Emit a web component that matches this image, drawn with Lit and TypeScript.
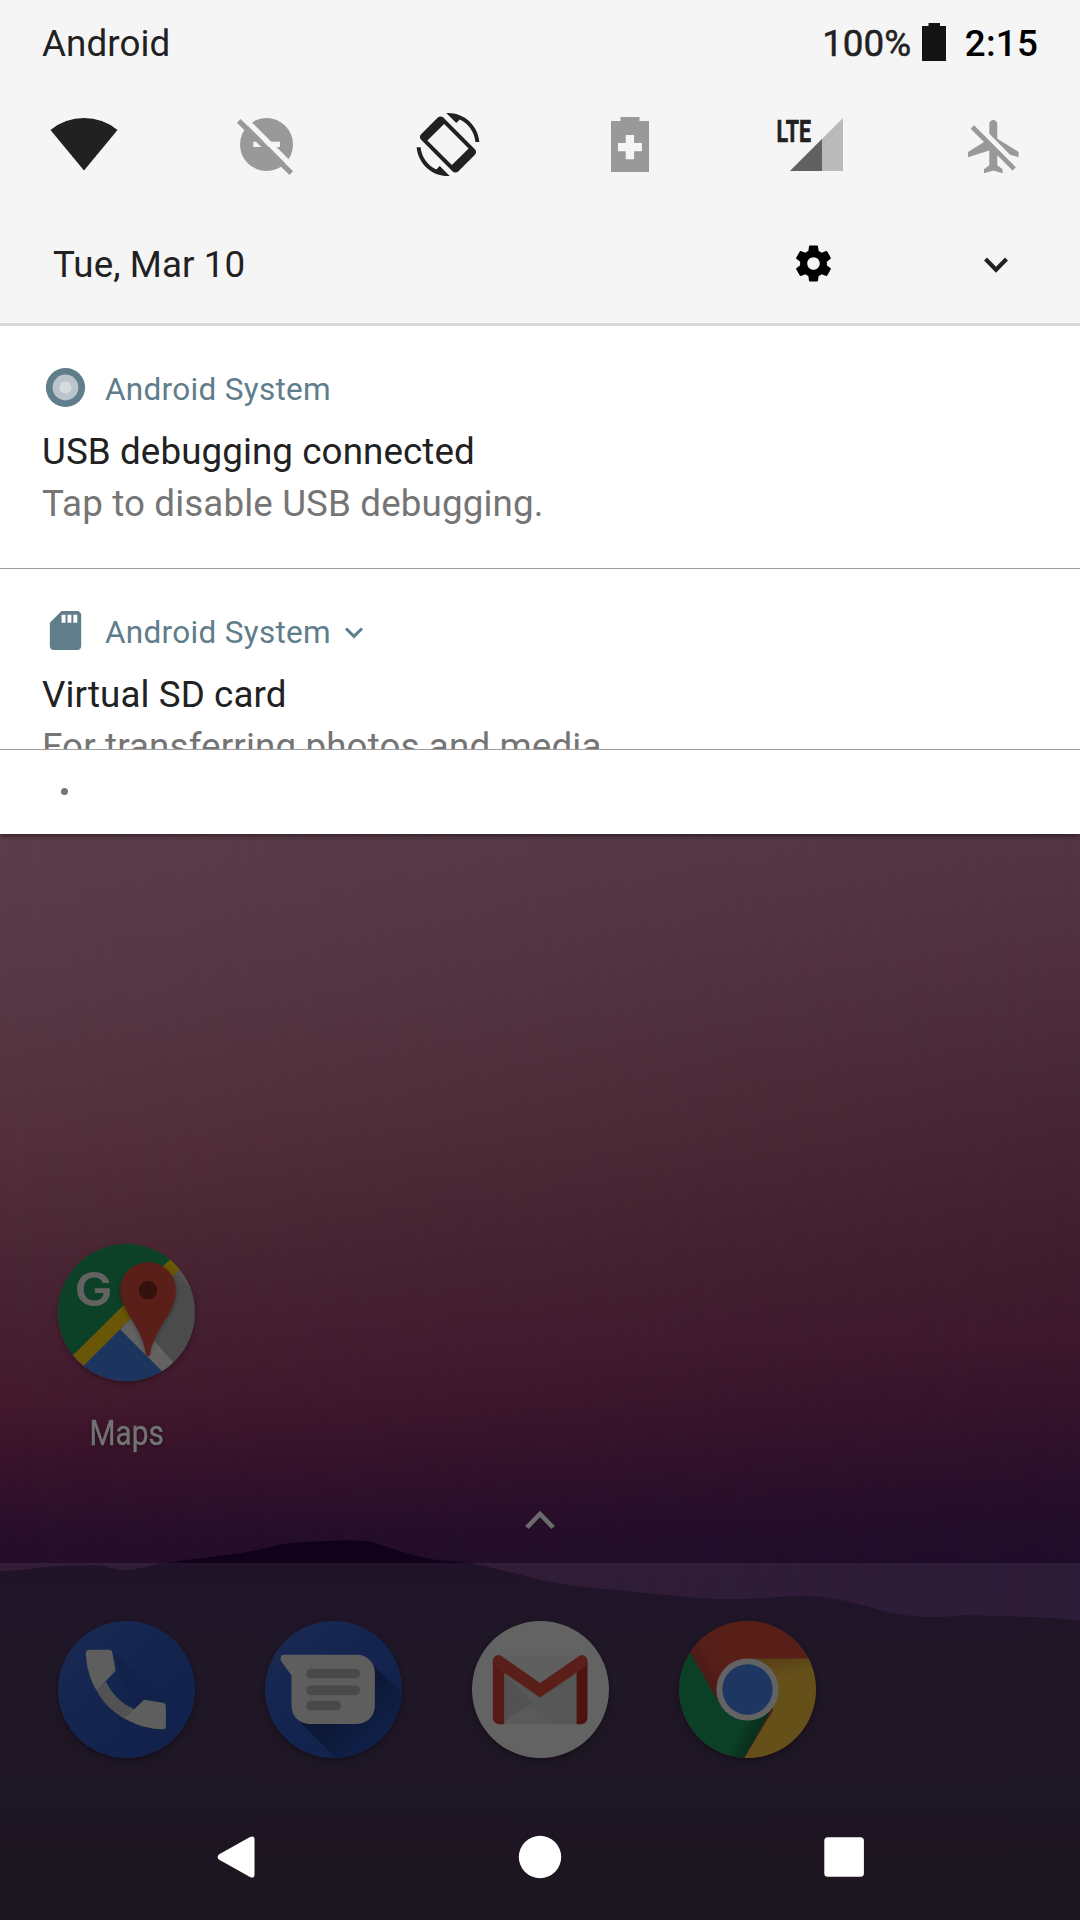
import { LitElement, html, css, svg, nothing, TemplateResult } from "lit";
import { customElement, property } from "lit/decorators.js";

const wifiIcon = html`<svg viewBox="0 0 68 68"><path d="M.5 20A52.8 52.8 0 0 1 67.5 20L34 60.5z" fill="#212121"/></svg>`;

const dndOffIcon = html`<svg viewBox="0 0 68 68">
  <circle cx="34.5" cy="34.5" r="26.5" fill="#999"/>
  <rect x="21.2" y="31.7" width="26.8" height="5.3" fill="#f5f5f5"/>
  <path d="M10.5 6.8L64 60.3" stroke="#f5f5f5" stroke-width="5.4"/>
  <path d="M6.8 10.8L59.2 63.2" stroke="#999" stroke-width="5.2"/>
</svg>`;

const rotateIcon = html`<svg viewBox="0 0 68 68"><g transform="translate(2.5 3) scale(2.625)" fill="#212121">
  <path d="M16.48 2.52c3.27 1.55 5.61 4.72 5.97 8.48h1.5C23.44 4.84 18.29 0 12 0l-.66.03 3.81 3.81 1.33-1.32z"/>
  <path d="M7.52 21.48C4.25 19.94 1.91 16.76 1.55 13H.05C.56 19.16 5.71 24 12 24l.66-.03-3.81-3.81-1.33 1.32z"/>
  <path fill-rule="evenodd" d="M10.23 1.75c-.59-.59-1.54-.59-2.12 0L1.75 8.11c-.59.59-.59 1.54 0 2.12l12.02 12.02c.59.59 1.54.59 2.12 0l6.36-6.36c.59-.59.59-1.54 0-2.12L10.23 1.75zM10.5 4.15L4.15 10.5 13.5 19.85 19.85 13.5z"/>
</g></svg>`;

const batterySaverIcon = html`<svg viewBox="0 0 68 68">
  <path fill-rule="evenodd" fill="#999" d="M24.5 7h19v4H53v51H15V11h9.500zM29.700 25v8H22v8.200h7.700V49.200h8.400V41.200H46V33h-7.900V25z"/>
</svg>`;

const lteIcon = html`<svg viewBox="0 0 68 68">
  <path d="M12 61L65 8V61z" fill="#bababa"/>
  <path d="M12 61L44 29V61z" fill="#616161"/>
  <text class="lte" x="-1.500" y="32" textLength="34.500" lengthAdjust="spacingAndGlyphs">LTE</text>
</svg>`;

const airplaneOffIcon = html`<svg viewBox="0 0 68 68"><path transform="translate(2.700 4.700) scale(2.660)" fill="#999" d="M13 9V3.500c0-.83-.67-1.500-1.500-1.500S10 2.670 10 3.500v3.680l7.830 7.830L21 16v-2l-8-5zM3 5.270l4.990 4.990L2 14v2l8-2.500V19l-2 1.500V22l3.500-1 3.500 1v-1.500L13 19v-3.730L18.730 21 20 19.730 4.270 4 3 5.270z"/></svg>`;

const gearIcon = html`<svg viewBox="0 0 24 24"><path d="M19.43 12.98c.04-.32.07-.64.07-.98s-.03-.66-.07-.98l2.11-1.65c.19-.15.24-.42.12-.64l-2-3.46c-.12-.22-.39-.3-.61-.22l-2.490 1c-.52-.4-1.080-.73-1.690-.98l-.38-2.650C14.460 2.180 14.250 2 14 2h-4c-.25 0-.46.18-.49.42l-.38 2.650c-.61.25-1.170.59-1.690.98l-2.490-1c-.23-.09-.49 0-.61.22l-2 3.460c-.13.22-.07.49.12.64l2.110 1.650c-.04.32-.07.65-.07.98s.03.66.07.98l-2.110 1.650c-.19.15-.24.42-.12.64l2 3.460c.12.22.39.3.61.22l2.490-1c.52.4 1.080.73 1.690.98l.38 2.650c.03.24.24.42.49.42h4c.25 0 .46-.18.49-.42l.38-2.650c.61-.25 1.170-.59 1.690-.98l2.490 1c.23.09.49 0 .61-.22l2-3.460c.12-.22.07-.49-.12-.64l-2.110-1.650zM12 15.500c-1.930 0-3.500-1.570-3.500-3.500s1.570-3.500 3.500-3.500 3.500 1.570 3.500 3.500-1.570 3.500-3.500 3.500z"/></svg>`;

const debugIcon = html`<svg viewBox="0 0 47 47">
  <circle cx="23.5" cy="23.5" r="19.6" fill="#607d8b"/>
  <circle cx="23.500" cy="23.500" r="12.900" fill="#bac5cb"/>
  <circle cx="23.500" cy="23.500" r="6" fill="#d5dce0"/>
</svg>`;

const sdIcon = html`<svg viewBox="0 0 24 24"><path fill="#607d8b" d="M18 2h-8L4.020 8 4 20c0 1.100.9 2 2 2h12c1.100 0 2-.9 2-2V4c0-1.100-.9-2-2-2zm-6 6h-2V4h2v4zm3 0h-2V4h2v4zm3 0h-2V4h2v4z"/></svg>`;

const mapsIcon = html`<svg viewBox="82 70 414 414">
  <defs>
    <clipPath id="m"><circle cx="289" cy="277" r="207"/></clipPath>
    <filter id="mb" x="-30%" y="-30%" width="160%" height="160%"><feGaussianBlur stdDeviation="7"/></filter>
  </defs>
  <g clip-path="url(#m)">
    <rect x="82" y="70" width="414" height="414" fill="#4b4b4b"/>
    <path d="M60 50H488L60 474z" fill="#0d4127"/>
    <path d="M270 328L310 288 440 440 397 465z" fill="#626262"/>
    <path d="M436 160L448 148 510 210V230z" fill="#525252"/>
    <path d="M120 477L270 328 420 478V500H120z" fill="#1c355f"/>
    <path d="M108 425L437 100 468 128 140 457z" fill="#6a5607"/>
    <path d="M354 135C306 135 268 163 268 215C268 262 318 310 336 368L354 404 372 368C395 306 440 268 440 215C438 163 402 135 354 135z" fill="#000" opacity=".28" filter="url(#mb)"/>
  </g>
  <path d="M354 125C306 125 270 163 270 208C270 262 318 304 338 362C343 378 346 392 347 404Q354 414 361 404C361 392 364 378 372 362C395 306 438 268 438 210C438 163 402 125 354 125z" fill="#5b1f19"/>
  <circle cx="354" cy="210" r="28" fill="#35110e"/>
  <text class="g" x="132" y="256" textLength="115" lengthAdjust="spacingAndGlyphs">G</text>
</svg>`;

const phoneIcon = html`<svg viewBox="53 60 414 414">
  <defs>
    <clipPath id="p"><circle cx="260" cy="267" r="207"/></clipPath>
    <linearGradient id="pb" x1="0" y1="0" x2="1" y2="1"><stop offset="0" stop-color="#1a2a52"/><stop offset=".5" stop-color="#13244f"/><stop offset="1" stop-color="#11214b"/></linearGradient>
    <linearGradient id="ps" gradientUnits="userSpaceOnUse" x1="220" y1="210" x2="380" y2="380"><stop offset="0" stop-color="#0b1838"/><stop offset="1" stop-color="#0b1838" stop-opacity="0"/></linearGradient>
  </defs>
  <g clip-path="url(#p)">
    <rect x="53" y="60" width="414" height="414" fill="url(#pb)"/>
    <path d="M216 150L480 400V520H380L175 290 280 325z" fill="url(#ps)" opacity=".28"/>
  </g>
  <path d="M198 243C216 282 246 311 284 326L258 358C218 336 188 306 170 271z" fill="#525252"/>
  <path d="M148 147H208Q216 147 217 155L227 210 170 271C148 234 139 196 137 158Q137 147 148 147z" fill="#5e5e5e"/>
  <path d="M313 298L371 307Q379 309 379 317V378Q379 387 369 387C328 386 292 377 254 354L284 326z" fill="#5e5e5e"/>
</svg>`;

const messagesIcon = html`<svg viewBox="673 60 414 414">
  <defs>
    <clipPath id="s"><circle cx="880" cy="267" r="207"/></clipPath>
    <linearGradient id="sb" x1="0" y1="0" x2="1" y2="1"><stop offset="0" stop-color="#1a2a52"/><stop offset=".5" stop-color="#13244f"/><stop offset="1" stop-color="#11214b"/></linearGradient>
    <linearGradient id="ss" gradientUnits="userSpaceOnUse" x1="900" y1="340" x2="980" y2="430"><stop offset="0" stop-color="#0c1835"/><stop offset="1" stop-color="#101f47"/></linearGradient>
  </defs>
  <g clip-path="url(#s)">
    <rect x="673" y="60" width="414" height="414" fill="url(#sb)"/>
    <path d="M990 185L1090 277V480H892L770 356z" fill="url(#ss)"/>
  </g>
  <path d="M729 162H951A54 54 0 0 1 1005 216V317A54 54 0 0 1 951 371H807A54 54 0 0 1 753 317V224L721 181Q717 163 729 162z" fill="#5e5e5e"/>
  <g fill="#494949"><rect x="798" y="204" width="162" height="29" rx="13"/><rect x="798" y="255" width="162" height="29" rx="13"/><rect x="798" y="301" width="105" height="29" rx="13"/></g>
</svg>`;

const gmailIcon = html`<svg viewBox="64 60 414 414">
  <circle cx="271" cy="267" r="207" fill="#636363"/>
  <path d="M145 163H395V372H145z" fill="#5d5d5d"/>
  <path d="M160 216L245 308 160 366z" fill="#525252"/>
  <path d="M160 216L270 291 380 216V371H302z" fill="#575757"/>
  <path d="M245 308L302 371H160z" fill="#5a5a5a"/>
  <path d="M150 163H390L270 247z" fill="#5f5f5f"/>
  <path d="M127 180L161 210V372H146Q127 370 127 351z" fill="#551a16"/>
  <path d="M413 180L380 210V372H394Q413 370 413 351z" fill="#4c1410"/>
  <path d="M151 165L270 247 389 165Q402 159 411 172Q417 188 405 199L270 291 135 199Q123 188 129 172Q138 159 151 165z" fill="#5b1f19"/>
</svg>`;

const chromeIcon = html`<svg viewBox="685 60 414 414">
  <defs>
    <clipPath id="c"><circle cx="892" cy="267" r="207"/></clipPath>
    <linearGradient id="cy" gradientUnits="userSpaceOnUse" x1="940" y1="173" x2="955" y2="240"><stop offset="0" stop-color="#563f16"/><stop offset="1" stop-color="#65501a"/></linearGradient>
    <linearGradient id="cg" gradientUnits="userSpaceOnUse" x1="930" y1="400" x2="870" y2="370"><stop offset="0" stop-color="#082d1b"/><stop offset="1" stop-color="#0c4026"/></linearGradient>
    <linearGradient id="cr" gradientUnits="userSpaceOnUse" x1="760" y1="235" x2="810" y2="205"><stop offset="0" stop-color="#4b1a15"/><stop offset="1" stop-color="#581f19"/></linearGradient>
  </defs>
  <g clip-path="url(#c)">
    <rect x="685" y="60" width="414" height="414" fill="url(#cr)"/>
    <path d="M892 173H1110V480H878L970 330z" fill="url(#cy)"/>
    <path d="M719 157L811 314 892 360 972 315 882 474 860 500H670V157z" fill="url(#cg)"/>
  </g>
  <circle cx="892" cy="267" r="94" fill="#636363"/>
  <circle cx="892" cy="267" r="76" fill="#1d3662"/>
</svg>`;

@customElement("notification-card")
export class NotificationCard extends LitElement {
  @property() app = "";
  @property() heading = "";
  @property() message = "";
  @property({ type: Boolean }) expandable = false;
  @property({ attribute: false }) icon: TemplateResult | typeof nothing = nothing;

  static styles = css`
    :host { display: block; padding: 38px 42px 0; }
    .head { display: flex; align-items: center; height: 47px; color: #607d8b; font-size: 31.5px; line-height: 37px; }
    .head > svg, .icon svg { display: block; }
    .icon { width: 47px; height: 47px; margin-right: 16px; }
    .app { padding-top: 3px; letter-spacing: .3px; }
    .more { width: 20px; height: 13px; margin: 3px 0 0 13px; }
    .body { margin-top: 15px; font-size: 36.75px; line-height: 52px; white-space: nowrap; }
    .heading { color: #212121; letter-spacing: .09px; }
    .message { color: #757575; letter-spacing: .13px; }
  `;

  render() {
    return html`
      <div class="head">
        <div class="icon">${this.icon}</div>
        <span class="app">${this.app}</span>
        ${this.expandable
          ? html`<svg class="more" viewBox="0 0 20 13"><path d="M2 2.500L10 10.300 18 2.500" fill="none" stroke="#607d8b" stroke-width="3"/></svg>`
          : nothing}
      </div>
      <div class="body">
        <div class="heading">${this.heading}</div>
        <div class="message">${this.message}</div>
      </div>`;
  }
}

@customElement("app-root")
export class AppRoot extends LitElement {
  static styles = css`
    :host { display: block; font-family: Roboto, "Noto Sans", sans-serif; }
    svg { display: block; overflow: visible; }
    .screen { position: relative; width: 1080px; height: 1920px; overflow: hidden; display: flex; flex-direction: column; background: #1c1522; }
    .wallpaper { position: absolute; left: 0; top: 0; width: 1080px; height: 1920px; }
    .shade { position: relative; height: 834px; background: #fff; box-shadow: 0 2px 5px rgba(0,0,0,.45); }
    .quick { display: flex; flex-direction: column; height: 323px; background: #f5f5f5; border-bottom: 3px solid #d9d9d9; color: #212121; font-size: 36.75px; line-height: 43px; letter-spacing: .08px; }
    .status { display: flex; align-items: center; height: 87px; padding: 0 42px; }
    .percent { margin-left: auto; -webkit-text-stroke: .5px #212121; }
    .battery { width: 24px; height: 38px; margin: 0 18.500px 3px 11px; }
    .clock { color: #000; font-weight: 500; letter-spacing: .2px; }
    .tiles { display: flex; justify-content: space-between; padding: 23px 52px 0 50px; }
    .tiles svg { width: 68px; height: 68px; }
    .lte { font: 700 31.5px Roboto, sans-serif; letter-spacing: 0; fill: #212121; stroke: #212121; stroke-width: .6px; }
    .footer { display: flex; align-items: center; margin-top: 56px; padding: 0 72px 0 53px; height: 61px; }
    .gear { width: 43px; height: 43px; margin: 0 149px 3px auto; }
    .expand { width: 24px; height: 16px; }
    .divider { height: 1px; background: #9e9e9e; }
    .first { height: 204px; }
    .second { height: 142px; overflow: hidden; }
    .overflow { display: flex; align-items: center; height: 82px; padding-left: 61px; }
    .dot { width: 7px; height: 7px; border-radius: 50%; background: #757575; }
    .home { position: relative; height: 729px; display: flex; flex-direction: column; padding: 410px 58px 0; box-sizing: border-box; }
    .shortcut { width: 137px; display: flex; flex-direction: column; align-items: center; }
    .appicon { width: 137px; height: 137px; border-radius: 50%; box-shadow: 0 2px 5px rgba(0,0,0,.35); flex: none; }
    .label { margin-top: 32px; font-size: 34.200px; line-height: 40px; color: #737373; transform: scaleX(.87); text-shadow: 0 1px 4px rgba(0,0,0,.5); -webkit-text-stroke: .4px #737373; }
    .up { width: 30px; height: 20px; margin: 57px auto 0; }
    .g { font: 600 141px Inter, sans-serif; fill: #626262; }
    .dock { position: relative; height: 173px; padding: 58px 58px 0; display: flex; gap: 70px; }
    .nav { position: relative; height: 126px; display: flex; align-items: center; justify-content: space-between; padding: 0 215px; }
    .nav svg { width: 42px; height: 44px; }
  `;

  private wallpaper() {
    return svg`
      <defs>
        <linearGradient id="west" gradientUnits="userSpaceOnUse" x1="0" y1="840" x2="0" y2="1640">
          <stop offset="0" stop-color="#5c3d4a"/>
          <stop offset=".2" stop-color="#573845"/>
          <stop offset=".37" stop-color="#54303b"/>
          <stop offset=".49" stop-color="#4d2936"/>
          <stop offset=".6" stop-color="#462132"/>
          <stop offset=".7" stop-color="#441a2d"/>
          <stop offset=".79" stop-color="#37122b"/>
          <stop offset=".87" stop-color="#270e2b"/>
          <stop offset="1" stop-color="#220d2a"/>
        </linearGradient>
        <linearGradient id="east" gradientUnits="userSpaceOnUse" x1="0" y1="840" x2="0" y2="1640">
          <stop offset="0" stop-color="#533544"/>
          <stop offset=".13" stop-color="#50303e"/>
          <stop offset=".32" stop-color="#482735"/>
          <stop offset=".52" stop-color="#3f1d2d"/>
          <stop offset=".62" stop-color="#3e182d"/>
          <stop offset=".72" stop-color="#33122b"/>
          <stop offset=".82" stop-color="#260e2a"/>
          <stop offset=".9" stop-color="#200d2a"/>
          <stop offset="1" stop-color="#200d2a"/>
        </linearGradient>
        <linearGradient id="blend"><stop offset="0" stop-color="#fff" stop-opacity="0"/><stop offset="1" stop-color="#fff"/></linearGradient>
        <mask id="fade"><rect width="1080" height="1920" fill="url(#blend)"/></mask>
        <linearGradient id="hill" gradientUnits="userSpaceOnUse" x1="0" y1="1541" x2="0" y2="1920">
          <stop offset="0" stop-color="#12001b"/>
          <stop offset=".06" stop-color="#11031a"/>
          <stop offset=".25" stop-color="#100618"/>
          <stop offset="1" stop-color="#0c0611"/>
        </linearGradient>
      </defs>
      <rect width="1080" height="1920" fill="url(#west)"/>
      <rect width="1080" height="1920" fill="url(#east)" mask="url(#fade)"/>
      <path fill="url(#hill)" d="M0 1571C25 1571 45 1566 62 1566S95 1564 103 1566S118 1570 127 1570S155 1564 172 1562C200 1558 220 1556 241 1553S280 1543 303 1542S350 1539 365 1541S400 1552 413 1555S435 1560 448 1561S465 1562 475 1564S498 1569 510 1572S540 1580 551 1582S575 1586 585 1587L634 1592 689 1597Q720 1600 744 1599L778 1597Q800 1595 813 1596T847 1601L888 1612Q910 1617 930 1617T964 1615Q1000 1616 1033 1617T1080 1621V1920H0z"/>
      <rect y="1563" width="1080" height="357" fill="#fff" fill-opacity=".065"/>
    `;
  }

  render() {
    return html`
      <div class="screen">
        <svg class="wallpaper" viewBox="0 0 1080 1920">${this.wallpaper()}</svg>
        <section class="shade">
          <header class="quick">
            <div class="status">
              <span>Android</span>
              <span class="percent">100%</span>
              <svg class="battery" viewBox="0 0 24 38"><path d="M6.500 0H18V3H24V38H0V3H6.500z" fill="#141414"/></svg>
              <span class="clock">2:15</span>
            </div>
            <div class="tiles">
              ${[wifiIcon, dndOffIcon, rotateIcon, batterySaverIcon, lteIcon, airplaneOffIcon]}
            </div>
            <div class="footer">
              <span>Tue, Mar 10</span>
              <div class="gear">${gearIcon}</div>
              <svg class="expand" viewBox="0 0 24 16"><path d="M1.500 2L12 12.700 22.500 2" fill="none" stroke="#212121" stroke-width="4.200"/></svg>
            </div>
          </header>
          <notification-card class="first" .icon=${debugIcon} app="Android System" heading="USB debugging connected" message="Tap to disable USB debugging."></notification-card>
          <div class="divider"></div>
          <notification-card class="second" .icon=${sdIcon} expandable app="Android System" heading="Virtual SD card" message="For transferring photos and media"></notification-card>
          <div class="divider"></div>
          <div class="overflow"><div class="dot"></div></div>
        </section>
        <main class="home">
          <div class="shortcut">
            <div class="appicon">${mapsIcon}</div>
            <span class="label">Maps</span>
          </div>
          <svg class="up" viewBox="0 0 30 20"><path d="M1.800 17.500L15 4 28.200 17.500" fill="none" stroke="#6b6b6b" stroke-width="4.600"/></svg>
        </main>
        <div class="dock">
          ${[phoneIcon, messagesIcon, gmailIcon, chromeIcon].map((i) => html`<div class="appicon">${i}</div>`)}
        </div>
        <nav class="nav">
          <svg viewBox="0 0 42 44"><path d="M3.800 19.500L35 2Q39.500 0 39.500 4.500V39.500Q39.500 44 35 42L3.800 24.500Q1.500 22 3.800 19.500z" fill="#fff"/></svg>
          <svg viewBox="0 0 42 44"><circle cx="21" cy="22" r="21.200" fill="#fff"/></svg>
          <svg viewBox="0 0 42 44"><rect x="1.300" y="2.200" width="39.600" height="39.600" rx="3.500" fill="#fff"/></svg>
        </nav>
      </div>`;
  }
}
